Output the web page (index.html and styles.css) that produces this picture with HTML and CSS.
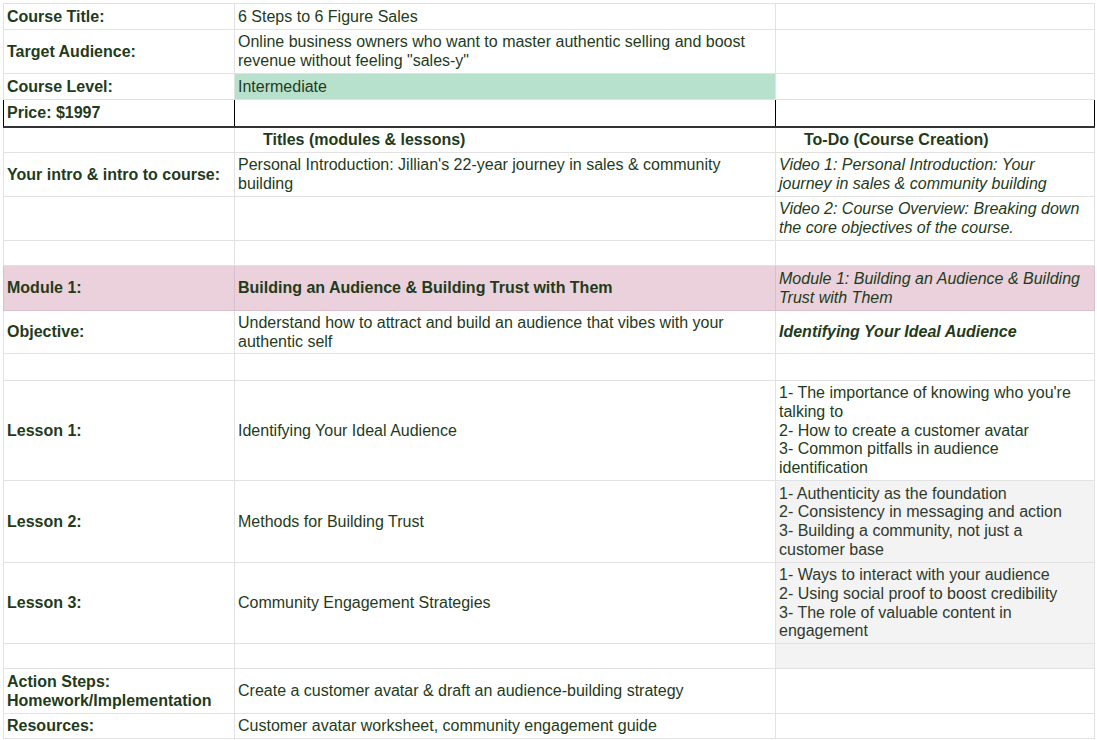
FILE: index.html
```html
<!DOCTYPE html>
<html lang="en">

<head>
    <meta charset="UTF-8">
    <meta name="viewport" content="width=device-width, initial-scale=1.0">
    <title>6 Steps to 6 Figure Sales - Course Outline</title>
    <link rel="stylesheet" href="styles.css">
</head>

<body>
    <table class="sheet">
        <colgroup>
            <col class="col-label">
            <col class="col-title">
            <col class="col-todo">
        </colgroup>
        <tr class="h26">
            <td class="label">Course Title:</td>
            <td>6 Steps to 6 Figure Sales</td>
            <td></td>
        </tr>
        <tr class="h44">
            <td class="label">Target Audience:</td>
            <td>Online business owners who want to master authentic selling and boost revenue without feeling "sales-y"</td>
            <td></td>
        </tr>
        <tr class="h26">
            <td class="label">Course Level:</td>
            <td class="green">Intermediate</td>
            <td></td>
        </tr>
        <tr class="h27 price-row">
            <td class="label">Price: $1997</td>
            <td></td>
            <td></td>
        </tr>
        <tr class="h26">
            <td></td>
            <td class="label heading">Titles (modules &amp; lessons)</td>
            <td class="label heading">To-Do (Course Creation)</td>
        </tr>
        <tr class="h44">
            <td class="label">Your intro &amp; intro to course:</td>
            <td>Personal Introduction: Jillian's 22-year journey in sales &amp; community building</td>
            <td class="note">Video 1: Personal Introduction: Your journey in sales &amp; community building</td>
        </tr>
        <tr class="h44">
            <td></td>
            <td></td>
            <td class="note">Video 2: Course Overview: Breaking down the core objectives of the course.</td>
        </tr>
        <tr class="h25">
            <td></td>
            <td></td>
            <td></td>
        </tr>
        <tr class="h45 module-row">
            <td class="label">Module 1:</td>
            <td class="label">Building an Audience &amp; Building Trust with Them</td>
            <td class="note">Module 1: Building an Audience &amp; Building Trust with Them</td>
        </tr>
        <tr class="h43">
            <td class="label">Objective:</td>
            <td>Understand how to attract and build an audience that vibes with your authentic self</td>
            <td class="note label">Identifying Your Ideal Audience</td>
        </tr>
        <tr class="h27">
            <td></td>
            <td></td>
            <td></td>
        </tr>
        <tr class="h100">
            <td class="label">Lesson 1:</td>
            <td>Identifying Your Ideal Audience</td>
            <td>1- The importance of knowing who you're talking to<br>2- How to create a customer avatar<br>3- Common pitfalls in audience identification</td>
        </tr>
        <tr class="h82">
            <td class="label">Lesson 2:</td>
            <td>Methods for Building Trust</td>
            <td class="grey">1- Authenticity as the foundation<br>2- Consistency in messaging and action<br>3- Building a community, not just a customer base</td>
        </tr>
        <tr class="h81">
            <td class="label">Lesson 3:</td>
            <td>Community Engagement Strategies</td>
            <td class="grey">1- Ways to interact with your audience<br>2- Using social proof to boost credibility<br>3- The role of valuable content in engagement</td>
        </tr>
        <tr class="h25">
            <td></td>
            <td></td>
            <td class="grey"></td>
        </tr>
        <tr class="h45">
            <td class="label">Action Steps: Homework/Implementation</td>
            <td>Create a customer avatar &amp; draft an audience-building strategy</td>
            <td></td>
        </tr>
        <tr class="h25">
            <td class="label">Resources:</td>
            <td>Customer avatar worksheet, community engagement guide</td>
            <td></td>
        </tr>
    </table>
</body>

</html>
```

FILE: styles.css
```css
:root {
    --text-color: #1f3b1b;
    --grid-color: #e2e2e2;
    --green-fill: #b7e1cd;
    --pink-fill: #ead1dc;
    --pink-line: #d8bfca;
    --grey-fill: #f3f3f3;
}

* {
    margin: 0;
    padding: 0;
    box-sizing: border-box;
}

body {
    background-color: white;
    padding: 3px 0 0 3px;
    font-family: 'Liberation Sans', Arial, sans-serif;
    font-size: 16px;
    color: var(--text-color);
}

.sheet {
    border-collapse: collapse;
    table-layout: fixed;
    width: 1091px;
}

.col-label {
    width: 231px;
}

.col-title {
    width: 541px;
}

.col-todo {
    width: 319px;
}

.sheet td {
    border: 1px solid var(--grid-color);
    padding: 1px 3px 0;
    line-height: 18.7px;
    vertical-align: middle;
    overflow: hidden;
}

.label {
    font-weight: 700;
}

.heading {
    padding-left: 28px !important;
}

.note {
    font-style: italic;
}

.green {
    background-color: var(--green-fill);
}

.grey {
    background-color: var(--grey-fill);
    color: #2f3a2e;
}

/* Price row gets a dark outline */
.price-row td {
    border: 1px solid #000;
    border-bottom: 2px solid #333;
}

.module-row td {
    background-color: var(--pink-fill);
    border-color: var(--pink-line);
}

/* Row heights taken from the sheet */
.h25 { height: 25px; }
.h26 { height: 26px; }
.h27 { height: 27px; }
.h43 { height: 43px; }
.h44 { height: 44px; }
.h45 { height: 45px; }
.h81 { height: 81px; }
.h82 { height: 82px; }
.h100 { height: 100px; }
```
